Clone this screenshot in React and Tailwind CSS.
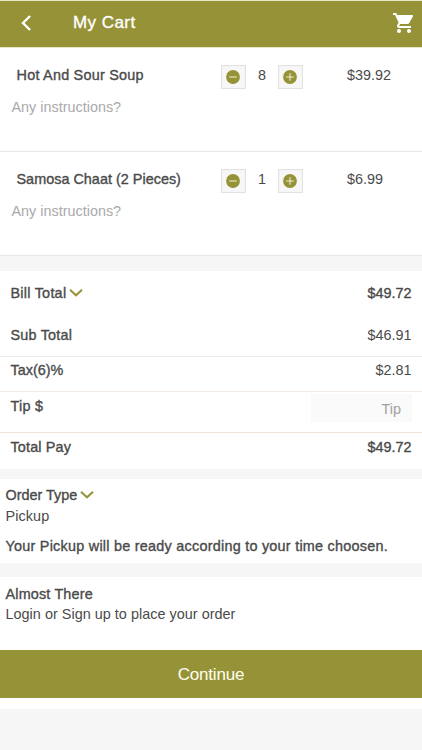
import React, { useState } from "react";
import { MdShoppingCart } from "react-icons/md";

const initialItems = [
  { id: 1, name: "Hot And Sour Soup", qty: 8, price: "$39.92", nameStyle: "tracking-[0.24px]" },
  { id: 2, name: "Samosa Chaat (2 Pieces)", qty: 1, price: "$6.99", nameStyle: "tracking-[0.02px]" },
];

const medium = "[-webkit-text-stroke:0.35px_currentColor]";

const Chevron = () => (
  <svg className="h-2 w-3.5" viewBox="0 0 14 8" fill="none" stroke="#969237" strokeWidth="2">
    <path d="M1 0.8 7 6.3l6-5.5" />
  </svg>
);

const QtyButton = ({ plus, onClick }) => (
  <button
    onClick={onClick}
    className="flex h-6 w-[25px] items-start justify-center border border-[#e2e2e2] bg-[#f7f7f7] pt-1 pr-px shadow-[inset_0_0_1px_#e4e4e4]"
  >
    <svg className="h-3.5 w-3.5" viewBox="0 0 14 14">
      <circle cx="7" cy="7" r="6.9" fill="#969237" />
      <path d={plus ? "M3.2 7h7.6M7 3.2v7.6" : "M3.2 7h7.6"} stroke="#f0f0d8" strokeWidth="1" />
    </svg>
  </button>
);

const CartItem = ({ item, onChange }) => (
  <div className="h-[104px] border-b border-[#e8e8e8] pt-[17px]">
    <div className="flex h-6 items-start">
      <div className={`w-[221px] pl-[16.5px] ${medium} ${item.nameStyle}`}>{item.name}</div>
      <QtyButton onClick={() => onChange(item.id, -1)} />
      <div className="w-8 text-center">{item.qty}</div>
      <QtyButton plus onClick={() => onChange(item.id, 1)} />
      <div className="ml-11">{item.price}</div>
    </div>
    <div className="mt-2 pl-[11.5px] text-[#aaa]">Any instructions?</div>
  </div>
);

const App = () => {
  const [items, setItems] = useState(initialItems);

  const changeQty = (id, step) => {
    setItems(items.map((i) => (i.id === id ? { ...i, qty: Math.max(0, i.qty + step) } : i)));
  };

  return (
    <div className="flex h-[750px] w-full flex-col overflow-hidden bg-[#f6f6f6] font-['Liberation_Sans',Arial,sans-serif] text-[14.4px] leading-5 text-[#4a4a4a]">
      {/* Header */}
      <header className="flex h-12 shrink-0 items-start border-y border-[#e9e7ca] bg-[#969237] text-white">
        <svg className="mt-3.5 ml-5 h-4 w-3" viewBox="0 0 12 16" fill="none" stroke="currentColor" strokeWidth="2.4">
          <path d="M10.1 1 3 8l7.1 7" />
        </svg>
        <h1 className={`mt-3 ml-[41px] text-[17px] tracking-[0.45px] ${medium}`}>My Cart</h1>
        <MdShoppingCart className="mt-2.5 mr-1.5 ml-auto h-6 w-6" />
      </header>

      {/* Items */}
      <div className="shrink-0 bg-white">
        {items.map((item) => (
          <CartItem key={item.id} item={item} onChange={changeQty} />
        ))}
      </div>

      {/* Bill */}
      <div className="mt-[15px] h-[198px] shrink-0 bg-white">
        <div className="flex h-[42px] items-start justify-between px-[10.5px] pt-3">
          <div className={`flex items-center gap-[3px] tracking-[0.25px] ${medium}`}>
            Bill Total
            <Chevron />
          </div>
          <span className={medium}>$49.72</span>
        </div>
        <div className="flex h-[44px] justify-between border-b border-[#f0e8e3] px-[10.5px] pt-3">
          <span className={`tracking-[0.2px] ${medium}`}>Sub Total</span>
          <span>$46.91</span>
        </div>
        <div className="flex h-[35px] justify-between border-b border-[#f0e8e3] px-[10.5px] pt-[3px]">
          <span className={medium}>Tax(6)%</span>
          <span>$2.81</span>
        </div>
        <div className="flex h-[41px] justify-between border-b border-[#f3e1da] pr-[10px] pl-[10.5px] pt-0.5">
          <span className={`pt-0.5 tracking-[0.25px] ${medium}`}>Tip $</span>
          <input
            placeholder="Tip"
            className="h-7 w-[101px] bg-[#fafafa] pt-0.5 pr-[11px] text-right outline-none placeholder:text-[#a0a0a0]"
          />
        </div>
        <div className="flex justify-between px-[10.5px] pt-1">
          <span className={`tracking-[0.15px] ${medium}`}>Total Pay</span>
          <span className={medium}>$49.72</span>
        </div>
      </div>

      {/* Order type */}
      <div className="mt-[10px] h-[84px] shrink-0 bg-white px-[5.5px] pt-1.5">
        <div className={`flex h-5 items-center gap-[3px] ${medium}`}>
          Order Type
          <Chevron />
        </div>
        <div className="mt-px tracking-[0.1px]">Pickup</div>
        <div className={`mt-2.5 whitespace-nowrap tracking-[0.25px] ${medium}`}>
          Your Pickup will be ready according to your time choosen.
        </div>
      </div>

      {/* Login */}
      <div className="mt-[14px] h-[73px] shrink-0 bg-white px-[5.5px] pt-[7px]">
        <div className={`tracking-[0.17px] ${medium}`}>Almost There</div>
        <div className="tracking-[0.03px]">Login or Sign up to place your order</div>
      </div>

      <div className="shrink-0 bg-white pb-[11px]">
        <button className="h-12 w-full bg-[#969237] pt-0.5 text-[17px] tracking-[-0.2px] text-[#fffff0]">
          Continue
        </button>
      </div>
    </div>
  );
};

export default App;
